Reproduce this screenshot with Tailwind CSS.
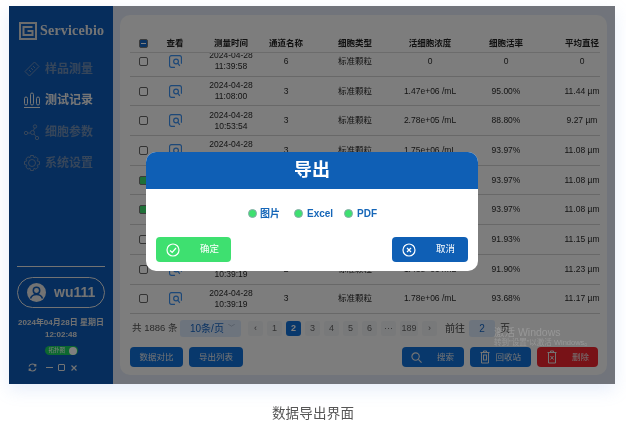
<!DOCTYPE html>
<html lang="zh-CN">
<head>
  <meta charset="UTF-8" />
  <title>数据导出界面</title>
  <script src="https://cdn.jsdelivr.net/npm/@tailwindcss/browser@4"></script>
</head>
<body class="bg-white h-[423px] w-[626px] overflow-hidden font-['Liberation_Sans','Noto_Sans_CJK_SC',sans-serif]">
  <div class="pl-[9px] pt-[6px] blur-[0.3px]">
    <div class="relative flex w-[606px] h-[378px] bg-[#e2e9f6] shadow-[0_6px_16px_rgba(120,160,230,0.18)]">
      <!-- sidebar -->
      <aside class="w-[104px] shrink-0 bg-[#0c5ab8] flex flex-col text-white">
        <div class="flex items-center gap-[3px] pl-[10px] pt-[14px]">
          <svg class="w-[18px] h-[18px]" viewBox="0 0 18 18" fill="none" stroke="#d8d8d8"><rect x="1" y="1" width="16" height="16" stroke-width="2"/><path d="M13.5 5H4.5V13H13.5V9H8.5" stroke-width="2"/></svg>
          <span class="font-['Liberation_Serif',serif] font-bold text-[14px] text-[#e8e8e8] tracking-[0.2px]">Servicebio</span>
        </div>
        <nav class="mt-[17px] pl-[14px] flex flex-col gap-[9.300px] text-[12px] font-bold">
          <div class="flex items-center gap-[4px] h-[22px] text-[#6d8cb5]">
            <svg class="w-[18px] h-[18px]" viewBox="0 0 18 18" fill="none" stroke="currentColor" stroke-width="1"><path d="M2 11.5L11.5 2L16 6.5L6.500 16Z"/><path d="M6 10l2 2M8 8l2 2M10 6l2 2"/></svg>
            <span>样品测量</span>
          </div>
          <div class="flex items-center gap-[4px] h-[22px] text-[#ededed]">
            <svg class="w-[18px] h-[18px]" viewBox="0 0 18 18" fill="none" stroke="currentColor" stroke-width="1"><rect x="1.500" y="6" width="3" height="8" rx="1.500"/><rect x="7.500" y="2" width="3" height="12" rx="1.500"/><rect x="13.500" y="6" width="3" height="8" rx="1.500"/><path d="M1 16.500H17"/></svg>
            <span>测试记录</span>
          </div>
          <div class="flex items-center gap-[4px] h-[22px] text-[#6d8cb5]">
            <svg class="w-[18px] h-[18px]" viewBox="0 0 18 18" fill="none" stroke="currentColor" stroke-width="1"><circle cx="3" cy="10" r="1.700"/><circle cx="12" cy="3.500" r="1.700"/><circle cx="14" cy="15" r="1.700"/><circle cx="9.500" cy="9.500" r="2"/><path d="M4.700 10H7.500M10.500 7.800L11.500 5M11 11L13 13.500"/></svg>
            <span>细胞参数</span>
          </div>
          <div class="flex items-center gap-[4px] h-[22px] text-[#6d8cb5]">
            <svg class="w-[18px] h-[18px]" viewBox="0 0 18 18" fill="none" stroke="currentColor" stroke-width="1"><circle cx="9" cy="9" r="3.500"/><path d="M7.500 1.500h3l.5 2.200 2-.9 2.100 2.100-1 2 2.400.6v3l-2.400.6 1 2-2.100 2.100-2-1-.5 2.300h-3l-.5-2.300-2 1-2.100-2.100 1-2-2.400-.6v-3l2.400-.6-1-2L5 2.800l2 .9z"/></svg>
            <span>系统设置</span>
          </div>
        </nav>
        <div class="mt-auto px-[8px] flex flex-col items-center">
          <div class="w-[88px] h-px bg-[#e6e6e6]"></div>
          <div class="mt-[10px] w-[88px] h-[31px] rounded-full border border-[#e6e6e6] flex items-center pl-[9px] gap-[8px]">
            <svg class="w-[19px] h-[19px]" viewBox="0 0 19 19"><circle cx="9.500" cy="9.500" r="9.500" fill="#e6e6e6"/><circle cx="9.500" cy="7.500" r="3.200" fill="none" stroke="#0c5ab8" stroke-width="1.500"/><path d="M3.500 15.500c1-3 3.200-4 6-4s5 1 6 4" fill="none" stroke="#0c5ab8" stroke-width="1.500"/></svg>
            <span class="text-[14px] font-bold text-[#e6e6e6]">wu111</span>
          </div>
          <div class="mt-[9px] text-[8px] leading-[12px] font-bold text-[#e0e0e0] text-center whitespace-nowrap">2024年04月28日 星期日<br />12:02:48</div>
          <div class="mt-[5px] w-[33px] h-[9px] rounded-full bg-[#1ad060] flex items-center justify-between pl-[4px] pr-px">
            <span class="text-[5.500px] text-white leading-none whitespace-nowrap">拓扑图</span>
            <span class="w-[8px] h-[8px] rounded-full bg-white"></span>
          </div>
          <div class="self-start ml-[11px] mt-[8px] mb-[12px] flex items-center">
            <svg class="w-[9px] h-[9px]" viewBox="0 0 9 9" fill="none" stroke="#e6e6e6" stroke-width="1.100"><path d="M1 3.500A3.700 3.700 0 0 1 7.800 3M8 5.500A3.700 3.700 0 0 1 1.200 6M7.800 1V3H6M1.200 8V6H3"/></svg>
            <span class="ml-[9px] w-[7px] h-px bg-[#e6e6e6]"></span>
            <span class="ml-[5px] w-[7px] h-[7px] rounded-[1px] border border-[#e6e6e6]"></span>
            <svg class="ml-[6px] w-[6px] h-[6px]" viewBox="0 0 6 6" stroke="#e6e6e6" stroke-width="1.200"><path d="M0.500 0.500L5.500 5.500M5.500 0.500L0.500 5.500"/></svg>
          </div>
        </div>
      </aside>

      <!-- main card -->
      <main class="ml-[7px] mt-[9px] w-[487px] h-[360px] rounded-[10px] bg-[#fafafa] px-[10px] flex flex-col">
        <div class="w-[470px] h-[282px] overflow-hidden mt-[19px]">
          <div id="thead" class="w-[476px] h-[19px] grid grid-cols-[26px_38px_74px_36px_102px_48px_104px_48px] text-[8.500px] font-bold text-[#222] border-b border-[#d8d8d8]"></div>
          <div class="h-[262px] overflow-hidden"><div id="tbody" class="-mt-[6px]"></div></div>
        </div>
        <div class="mt-[4px] h-[17px] flex items-center text-[#555] text-[9.500px]">
          <span class="w-[48px] ml-[2px] whitespace-nowrap">共 1886 条</span>
          <div class="w-[61px] h-[17px] rounded-[3px] bg-[#dbe8fb] text-[#1566c4] flex items-center pl-[10px] gap-[4px] text-[10px]">10条/页<span class="text-[7px] text-[#9ab]">﹀</span></div>
          <div id="pager" class="ml-[7px] flex gap-[4px] text-[9px]"></div>
          <span class="ml-[8px] text-[10px] text-[#444]">前往</span>
          <div class="ml-[4px] w-[26px] h-[17px] rounded-[3px] bg-[#dbe8fb] text-[#1566c4] flex items-center justify-center text-[10px]">2</div>
          <span class="ml-[5px] text-[10px] text-[#444]">页</span>
        </div>
        <div class="mt-[10px] w-[468px] flex items-center gap-[6px] text-[8.500px] text-[#e8e8e8]">
          <div class="w-[53px] h-[20px] rounded-[4px] bg-[#1170d8] flex items-center justify-center">数据对比</div>
          <div class="w-[54px] h-[20px] rounded-[4px] bg-[#1170d8] flex items-center justify-center">导出列表</div>
          <div class="ml-auto w-[62px] h-[20px] rounded-[4px] bg-[#1170d8] flex items-center justify-between pl-[9px] pr-[10px]">
            <svg class="w-[11px] h-[11px]" viewBox="0 0 12 12" fill="none" stroke="currentColor" stroke-width="1.200"><circle cx="5" cy="5" r="4"/><path d="M8 8L11.500 11.500"/></svg><span>搜索</span>
          </div>
          <div class="w-[61px] h-[20px] rounded-[4px] bg-[#1170d8] flex items-center justify-between pl-[10px] pr-[10px]">
            <svg class="w-[10px] h-[14px]" viewBox="0 0 10 14" fill="none" stroke="currentColor" stroke-width="1"><path d="M0.500 2.500H9.500M3.500 2.500V1H6.500V2.500M1.500 2.500V13H8.500V2.500"/><rect x="3.500" y="5" width="3" height="5"/></svg><span>回收站</span>
          </div>
          <div class="w-[61px] h-[20px] rounded-[4px] bg-[#f0242e] flex items-center justify-between pl-[10px] pr-[9px]">
            <svg class="w-[10px] h-[14px]" viewBox="0 0 10 14" fill="none" stroke="currentColor" stroke-width="1"><path d="M0.500 2.500H9.500M3.500 2.500V1H6.500V2.500M1.500 2.500V13H8.500V2.500M3.500 6L6.500 9.500M6.500 6L3.500 9.500"/></svg><span>删除</span>
          </div>
        </div>
      </main>

      <!-- dim layer -->
      <div class="absolute inset-0 bg-black/50"></div>
      <div class="absolute z-20 left-[485px] top-[320px] text-white/20 whitespace-nowrap">
        <div class="text-[10.500px] leading-[12px]">激活 Windows</div>
        <div class="text-[7.500px] leading-[10px]">转到"设置"以激活 Windows。</div>
      </div>

      <!-- export dialog -->
      <div class="absolute z-20 left-[137px] top-[146px] w-[332px] h-[119px] rounded-[10px] bg-white overflow-hidden flex flex-col">
        <div class="h-[37px] bg-[#0f5fb5] flex items-center justify-center text-white text-[18px] font-bold">导出</div>
        <div class="h-[48px] pl-[102px] flex items-center text-[10px] font-bold text-[#1566b8]">
          <span class="w-[9px] h-[9px] rounded-full bg-[#3ee070] border border-[#8aa]"></span><span class="ml-[3px] w-[34px]">图片</span>
          <span class="w-[9px] h-[9px] rounded-full bg-[#3ee070] border border-[#8aa]"></span><span class="ml-[4px] w-[37px]">Excel</span>
          <span class="w-[9px] h-[9px] rounded-full bg-[#3ee070] border border-[#8aa]"></span><span class="ml-[4px]">PDF</span>
        </div>
        <div class="px-[10px] flex justify-between text-[9.500px] text-white">
          <div class="w-[75px] h-[25px] rounded-[4px] bg-[#3ee070] flex items-center pl-[10px]">
            <svg class="w-[14px] h-[14px]" viewBox="0 0 14 14" fill="none" stroke="currentColor" stroke-width="1.200"><circle cx="7" cy="7" r="6"/><path d="M4 7.500L6.200 9.500L10 5"/></svg><span class="ml-[20px]">确定</span>
          </div>
          <div class="w-[76px] h-[25px] rounded-[4px] bg-[#0f5fb5] flex items-center pl-[10px]">
            <svg class="w-[14px] h-[14px]" viewBox="0 0 14 14" fill="none" stroke="currentColor" stroke-width="1.200"><circle cx="7" cy="7" r="6"/><path d="M5 5L9 9M9 5L5 9"/></svg><span class="ml-[20px]">取消</span>
          </div>
        </div>
      </div>
    </div>
    <p class="mt-[20px] -ml-[9px] text-center text-[13.500px] text-[#555] tracking-[0.2px]">数据导出界面</p>
  </div>

  <script>
    const cols = 'w-[476px] h-[29.700px] grid grid-cols-[26px_38px_74px_36px_102px_48px_104px_48px] text-[8.500px] leading-[11px] text-[#2a2a2a] border-b border-[#d0d0d0]';
    const cell = 'flex items-center justify-center text-center whitespace-nowrap';
    const heads = ['', '查看', '测量时间', '通道名称', '细胞类型', '活细胞浓度', '细胞活率', '平均直径'];
    document.getElementById('thead').innerHTML = heads.map((h, i) => i === 0
      ? `<div class="${cell}"><span class="w-[9px] h-[9px] rounded-[2px] bg-[#1566c4] border border-[#777] flex items-center justify-center"><span class="w-[5px] h-px bg-white"></span></span></div>`
      : `<div class="${cell}">${h}</div>`).join('');

    const rows = [
      ['11:39:58', '6', '0', '0', '0', 0],
      ['11:08:00', '3', '1.47e+06 /mL', '95.00%', '11.44 µm', 0],
      ['10:53:54', '3', '2.78e+05 /mL', '88.80%', '9.27 µm', 0],
      ['10:39:19', '3', '1.75e+06 /mL', '93.97%', '11.08 µm', 0],
      ['10:39:19', '3', '1.75e+06 /mL', '93.97%', '11.08 µm', 1],
      ['10:39:19', '3', '1.75e+06 /mL', '93.97%', '11.08 µm', 1],
      ['10:39:19', '3', '1.62e+06 /mL', '91.93%', '11.15 µm', 0],
      ['10:39:19', '2', '1.48e+06 /mL', '91.90%', '11.23 µm', 0],
      ['10:39:19', '3', '1.78e+06 /mL', '93.68%', '11.17 µm', 0],
    ];
    const view = '<svg class="w-[13px] h-[13px]" viewBox="0 0 12 12" fill="none" stroke="#3a90f0" stroke-width="1.100"><path d="M11.500 8V2.500a2 2 0 0 0-2-2h-7a2 2 0 0 0-2 2v7a2 2 0 0 0 2 2h3"/><circle cx="6.500" cy="6" r="2.200"/><path d="M8.200 7.800L10 10"/></svg>';
    document.getElementById('tbody').innerHTML = rows.map(r => `
      <div class="${cols}">
        <div class="${cell}"><span class="w-[9px] h-[9px] rounded-[2px] border ${r[5] ? 'bg-[#3ee070] border-[#777]' : 'bg-white border-[#666]'}"></span></div>
        <div class="${cell}">${view}</div>
        <div class="${cell}">2024-04-28<br />${r[0]}</div>
        <div class="${cell}">${r[1]}</div>
        <div class="${cell}">标准颗粒</div>
        <div class="${cell}">${r[2]}</div>
        <div class="${cell}">${r[3]}</div>
        <div class="${cell}">${r[4]}</div>
      </div>`).join('');

    const pages = ['‹', '1', '2', '3', '4', '5', '6', '···', '189', '›'];
    document.getElementById('pager').innerHTML = pages.map(p => {
      const wide = p === '189' ? 'w-[18px]' : 'w-[15px]';
      const tone = p === '2' ? 'bg-[#1170d8] text-white font-bold' : 'bg-[#f0f2f5] text-[#666]';
      return `<span class="${wide} h-[15px] rounded-[3px] flex items-center justify-center ${tone}">${p}</span>`;
    }).join('');
  </script>
</body>
</html>
